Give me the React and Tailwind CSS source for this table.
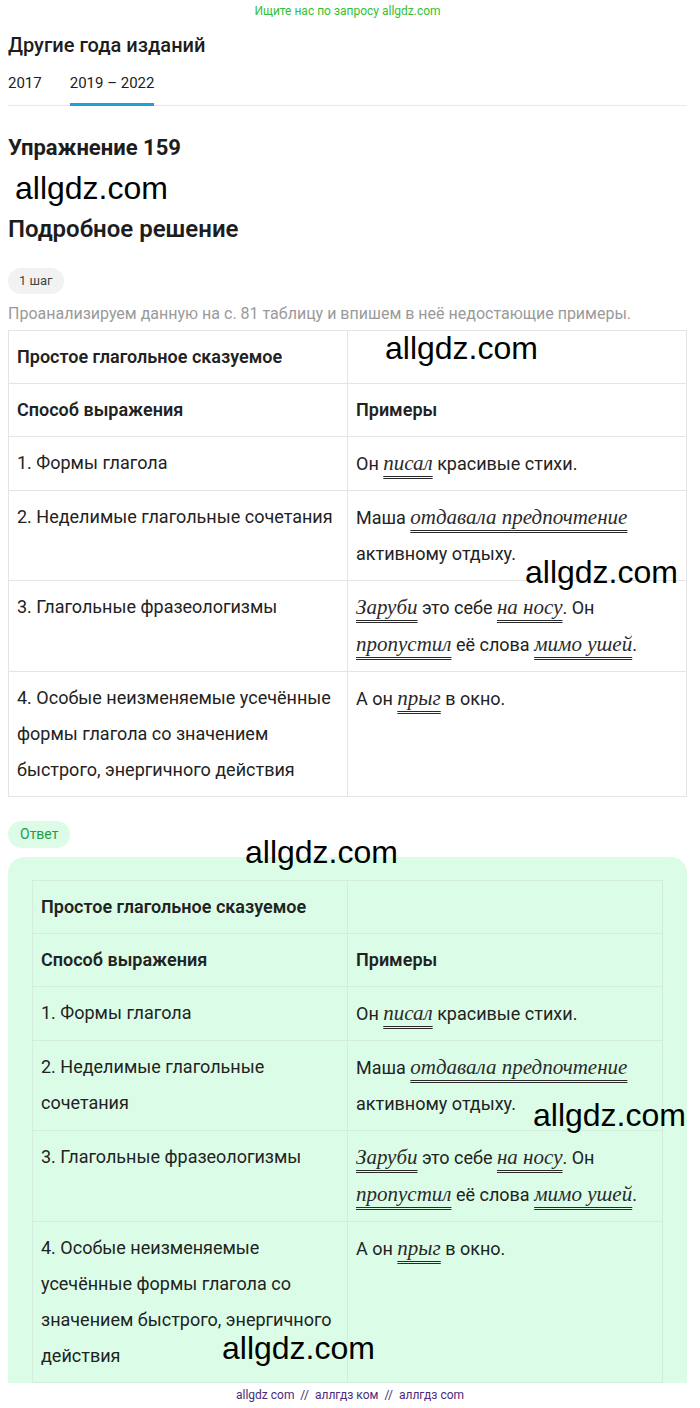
import React from 'react';

const rows = [
  {
    left: '1. Формы глагола',
    right: (
      <>
        Он <U>писал</U> красивые стихи.
      </>
    ),
  },
  {
    left: '2. Неделимые глагольные сочетания',
    right: (
      <>
        Маша <U>отдавала предпочтение</U> активному отдыху.
      </>
    ),
  },
  {
    left: '3. Глагольные фразеологизмы',
    right: (
      <>
        <U>Заруби</U> это себе <U>на носу</U>. Он <U>пропустил</U> её слова <U>мимо ушей</U>.
      </>
    ),
  },
  {
    left: '4. Особые неизменяемые усечённые формы глагола со значением быстрого, энергичного действия',
    right: (
      <>
        А он <U>прыг</U> в окно.
      </>
    ),
  },
];

function U({ children }) {
  return (
    <span className="font-['Liberation_Serif',serif] italic text-[21px] text-[#2a2a2a] underline decoration-double decoration-1 underline-offset-[6px]">
      {children}
    </span>
  );
}

function Watermark({ className }) {
  return (
    <div className={`absolute font-['Liberation_Sans',Arial,sans-serif] text-[32px] leading-none text-black pointer-events-none ${className}`}>
      allgdz.com
    </div>
  );
}

function PredicateTable({ border }) {
  const cell = `px-2 py-2 align-top border ${border}`;
  return (
    <table className="w-full table-fixed border-collapse text-[18px] leading-[36px] text-[#222]">
      <tbody>
        <tr>
          <td className={`${cell} font-semibold`}>Простое глагольное сказуемое</td>
          <td className={cell}></td>
        </tr>
        <tr>
          <td className={`${cell} font-semibold`}>Способ выражения</td>
          <td className={`${cell} font-semibold`}>Примеры</td>
        </tr>
        {rows.map((r, i) => (
          <tr key={i}>
            <td className={cell}>{r.left}</td>
            <td className={cell}>{r.right}</td>
          </tr>
        ))}
      </tbody>
    </table>
  );
}

export default function App() {
  return (
    <div className="relative min-h-[1408px] bg-white pl-2 pr-[13px] font-['Roboto','Noto_Sans',sans-serif] text-[#1d1d1d]">
      <div className="h-[22px] text-center text-[12px] leading-[22px] text-[#35c035]">
        Ищите нас по запросу allgdz.com
      </div>

      <h2 className="mt-[9px] text-[20px] font-medium leading-[28px]">Другие года изданий</h2>
      <div className="mt-3 flex gap-7 border-b border-[#e8e8e8] text-[15px] leading-6">
        <div className="pb-[10px]">2017</div>
        <div className="-mb-px border-b-[3px] border-[#1ea1d4] pb-[8px]">2019 – 2022</div>
      </div>

      <h1 className="mt-[27px] text-[22px] font-bold leading-[30px]">Упражнение 159</h1>
      <div className="mt-[7px] pl-[7px] font-['Liberation_Sans',Arial,sans-serif] text-[32px] leading-[36px] text-black">
        allgdz.com
      </div>
      <h2 className="mt-[8px] text-[24px] font-semibold leading-[30px]">Подробное решение</h2>

      <div className="mt-6 inline-flex h-[26px] items-center rounded-full bg-[#f2f2f2] px-[11px] text-[13px] text-[#444]">
        1 шаг
      </div>
      <p className="mt-[9px] text-[16px] leading-[22px] text-[#9a9a9a]">
        Проанализируем данную на с. 81 таблицу и впишем в неё недостающие примеры.
      </p>

      <div className="relative mt-[5px]">
        <PredicateTable border="border-[#e4e4e4]" />
        <Watermark className="left-[377px] top-[2px]" />
        <Watermark className="left-[517px] top-[226px]" />
      </div>

      <div className="mt-6 inline-flex h-[27px] items-center rounded-full bg-[#dcfce7] px-3 text-[14px] text-[#1f9d4a]">
        Ответ
      </div>
      <div className="relative mt-[9px] rounded-2xl bg-[#dbfde7] px-6 pt-[23px] pb-6">
        <PredicateTable border="border-[#d4ecdc]" />
        <Watermark className="left-[237px] top-[-21px]" />
        <Watermark className="left-[525px] top-[242px]" />
        <Watermark className="left-[214px] top-[475px]" />
      </div>

      <div className="fixed bottom-0 left-0 right-0 h-[25px] bg-white text-center text-[12px] leading-[25px] text-[#4b2a7d]">
        allgdz com&nbsp; // &nbsp;аллгдз ком&nbsp; // &nbsp;аллгдз com
      </div>
    </div>
  );
}
